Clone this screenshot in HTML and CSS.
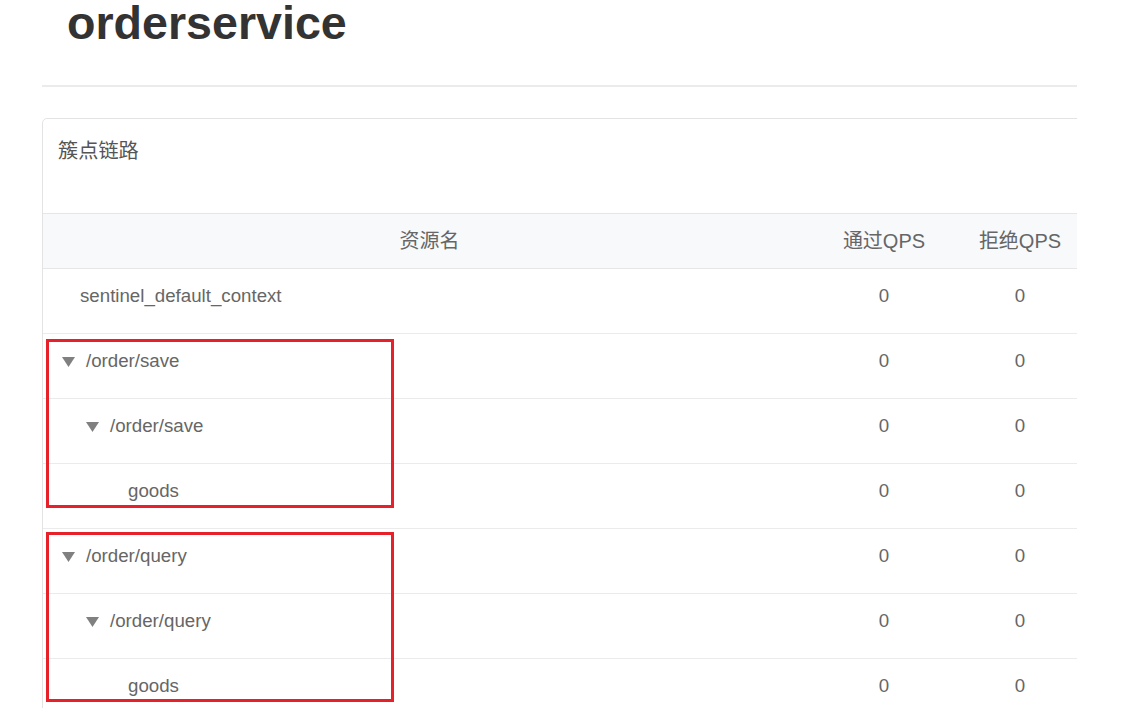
FILE: index.html
```html
<!DOCTYPE html>
<html lang="zh">
<head>
<meta charset="utf-8">
<title>orderservice</title>
<link rel="stylesheet" href="styles.css">
</head>
<body>
<div class="page">
  <h1 class="title">orderservice</h1>
  <div class="rule"></div>
  <div class="clip">
    <div class="panel">
      <div class="panel-head">簇点链路</div>
      <table class="tree">
        <colgroup>
          <col class="c-name">
          <col class="c-num">
          <col class="c-num">
        </colgroup>
        <thead>
          <tr><th>资源名</th><th>通过QPS</th><th>拒绝QPS</th></tr>
        </thead>
        <tbody>
          <tr><td class="name l1"><span class="leaf"></span>sentinel_default_context</td><td>0</td><td>0</td></tr>
          <tr><td class="name l1"><svg class="caret" viewBox="0 0 13 10"><path d="M0 0H13L6.5 10Z"/></svg>/order/save</td><td>0</td><td>0</td></tr>
          <tr><td class="name l2"><svg class="caret" viewBox="0 0 13 10"><path d="M0 0H13L6.5 10Z"/></svg>/order/save</td><td>0</td><td>0</td></tr>
          <tr><td class="name l3"><span class="leaf"></span>goods</td><td>0</td><td>0</td></tr>
          <tr><td class="name l1"><svg class="caret" viewBox="0 0 13 10"><path d="M0 0H13L6.5 10Z"/></svg>/order/query</td><td>0</td><td>0</td></tr>
          <tr><td class="name l2"><svg class="caret" viewBox="0 0 13 10"><path d="M0 0H13L6.5 10Z"/></svg>/order/query</td><td>0</td><td>0</td></tr>
          <tr><td class="name l3"><span class="leaf"></span>goods</td><td>0</td><td>0</td></tr>
        </tbody>
      </table>
      <div class="mark mark-save"></div>
      <div class="mark mark-query"></div>
    </div>
  </div>
</div>
</body>
</html>
```
FILE: styles.css
```css
html, body {
  margin: 0;
  padding: 0;
  background: #fff;
}
body {
  font-family: "Liberation Sans", Arial, "Noto Sans CJK SC", sans-serif;
  color: #666;
  overflow: hidden;
}
.page {
  padding-left: 42px;
  width: 1035px;
}
.title {
  margin: 0;
  padding: 1px 0 0 25px;
  font-size: 46.6px;
  line-height: 44px;
  font-weight: bold;
  color: #333;
}
.rule {
  margin-top: 40px;
  height: 2px;
  background: #ebebeb;
}
.clip {
  margin-top: 31px;
  width: 1035px;
  overflow: hidden;
}
.panel {
  position: relative;
  width: 1100px;
  border: 1px solid #e3e3e3;
  border-radius: 5px;
  background: #fff;
}
.panel-head {
  height: 76px;
  padding: 18px 0 0 15px;
  font-family: "Noto Sans CJK SC", sans-serif;
  font-size: 20.2px;
  line-height: 26px;
  color: #555;
}
.tree {
  border-collapse: collapse;
  table-layout: fixed;
  width: 1045px;
}
.c-name { width: 773px; }
.c-num { width: 136px; }
.tree th {
  height: 50px;
  padding: 0 0 4px;
  background: #f8f9fb;
  border-top: 1px solid #e6e6e6;
  border-bottom: 1px solid #e6e6e6;
  font-weight: normal;
  font-size: 20px;
  color: #666;
  text-align: center;
  font-family: "Liberation Sans", "Noto Sans CJK SC", sans-serif;
}
.tree td {
  height: 54px;
  padding: 0 0 10px;
  border-top: 1px solid #ebebeb;
  font-size: 18.7px;
  color: #666;
  text-align: center;
}
.tree tbody tr:first-child td {
  border-top: none;
}
.tree td.name {
  text-align: left;
  white-space: nowrap;
}
.l1 { padding-left: 19px !important; }
.l2 { padding-left: 43px !important; }
.l3 { padding-left: 67px !important; }
.caret {
  display: inline-block;
  width: 13px;
  height: 10px;
  margin-right: 11px;
  fill: #808080;
  vertical-align: 0;
}
.leaf {
  display: inline-block;
  width: 18px;
}
.mark {
  position: absolute;
  left: 3px;
  width: 342px;
  border: 3px solid #e62129;
}
.mark-save {
  top: 220px;
  height: 163px;
}
.mark-query {
  top: 413px;
  height: 164px;
}
```
